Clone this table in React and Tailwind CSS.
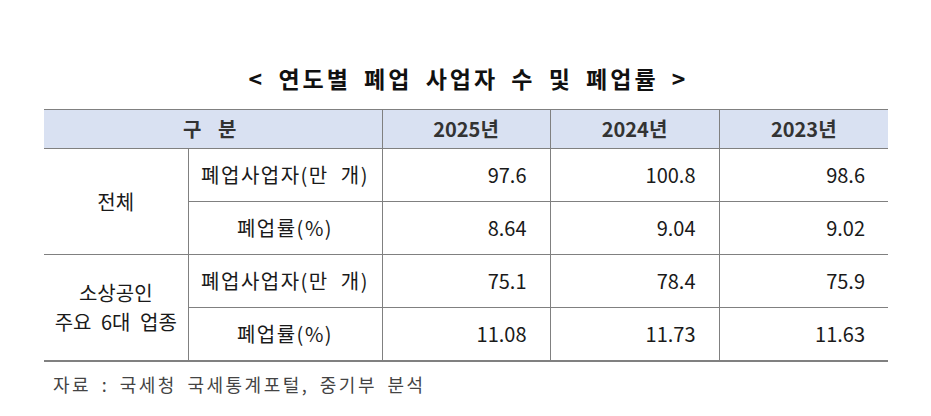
const years = ['2025년', '2024년', '2023년']

const rows = [
    { group: ['전체'], items: [
        { label: '폐업사업자(만 개)', values: ['97.6', '100.8', '98.6'] },
        { label: '폐업률(%)', values: ['8.64', '9.04', '9.02'] },
    ] },
    { group: ['소상공인', '주요 6대 업종'], items: [
        { label: '폐업사업자(만 개)', values: ['75.1', '78.4', '75.9'] },
        { label: '폐업률(%)', values: ['11.08', '11.73', '11.63'] },
    ] },
]

const App = () => {
    return (
        <div className="w-[931px] h-[416px] bg-white text-[#1a1a1a] font-['Noto_Sans_CJK_KR',sans-serif]">
            {/* Title */}
            <div className="pt-[63px] h-[109px] text-center">
                <h1 className="text-[23px] leading-[30px] font-bold tracking-[3px] [word-spacing:5px] pl-[6px] text-[#111]">
                    &lt; 연도별 폐업 사업자 수 및 폐업률 &gt;
                </h1>
            </div>

            {/* Table */}
            <table className="ml-[44px] w-[844px] border-collapse table-fixed">
                <colgroup>
                    <col className="w-[144px]" />
                    <col className="w-[194px]" />
                    <col className="w-[168px]" />
                    <col className="w-[169px]" />
                    <col className="w-[169px]" />
                </colgroup>
                <thead>
                    <tr className="h-[39px] bg-[#d9e1f2] border-t border-b border-[#808080]">
                        <th colSpan={2} className="text-[20px] font-bold text-[#333] tracking-[6px] border-r border-[#808080]">구 분</th>
                        {years.map((y, i) => (
                            <th key={y} className={`text-[20px] font-bold text-[#333] ${i < 2 ? 'border-r border-[#808080]' : ''}`}>{y}</th>
                        ))}
                    </tr>
                </thead>
                <tbody>
                    {rows.map((g, gi) => g.items.map((item, ii) => (
                        <tr key={`${gi}-${ii}`} className={`h-[53px] ${gi === 1 && ii === 1 ? 'border-b-2' : 'border-b'} border-[#808080]`}>
                            {ii === 0 && (
                                <td rowSpan={2} className="text-center text-[20px] leading-[29px] [word-spacing:5px] border-r border-[#808080]">
                                    {g.group.map(t => <div key={t}>{t}</div>)}
                                </td>
                            )}
                            <td className="text-center text-[20px] border-r border-[#808080] tracking-[1.5px] [word-spacing:6px]">{item.label}</td>
                            {item.values.map((v, vi) => (
                                <td key={vi} className={`text-right pr-[23px] text-[20px] ${vi < 2 ? 'border-r border-[#808080]' : ''}`}>{v}</td>
                            ))}
                        </tr>
                    )))}
                </tbody>
            </table>

            {/* Source */}
            <p className="ml-[53px] mt-[9px] text-[18px] text-[#444] tracking-[2.5px] [word-spacing:4px]">
                자료 : 국세청 국세통계포털, 중기부 분석
            </p>
        </div>
    )
}

export default App
